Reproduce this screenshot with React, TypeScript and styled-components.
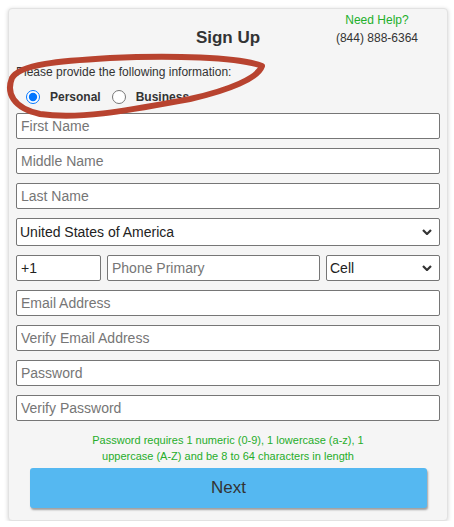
import React from "react";
import styled, { createGlobalStyle } from "styled-components";

const GlobalStyle = createGlobalStyle`
    html, body {
        margin: 0;
        padding: 0;
        background: #ffffff;
    }
    body {
        font-family: "Liberation Sans", Arial, sans-serif;
        color: #333;
    }
`;

const Card = styled.div`
    position: relative;
    box-sizing: border-box;
    width: 440px;
    height: 513px;
    margin: 8px 0 0 8px;
    padding: 2px 7px 0 7px;
    background: #f5f5f5;
    border: 1px solid #e2e2e2;
    border-radius: 4px;
    box-shadow: 0 1px 4px rgba(0, 0, 0, 0.18);
`;

const Header = styled.div`
    display: grid;
    grid-template-columns: 1fr auto 1fr;
    align-items: end;
`;

const Title = styled.h1`
    grid-column: 2;
    margin: 0;
    font-size: 17px;
    font-weight: bold;
    line-height: 20px;
    color: #333;
`;

const Help = styled.div`
    grid-column: 3;
    justify-self: end;
    margin-right: 22px;
    margin-bottom: 1px;
    text-align: center;
    font-size: 12px;
    line-height: 18px;
`;

const HelpLink = styled.div`
    color: #22b02a;
`;

const Intro = styled.p`
    margin: 17px 0 0 0;
    font-size: 12px;
    line-height: 14px;
    color: #333;
`;

const RadioRow = styled.div`
    display: flex;
    align-items: center;
    height: 22px;
    margin: 7px 0 5px 10px;
`;

const RadioLabel = styled.label`
    display: flex;
    align-items: center;
    gap: 10px;
    margin-right: 11px;
    font-size: 12px;
    font-weight: bold;
    color: #333;
    input {
        width: 14px;
        height: 14px;
        margin: 0;
        accent-color: #0075ff;
    }
`;

const Fields = styled.div`
    display: flex;
    flex-direction: column;
    gap: 9px;
`;

const Input = styled.input`
    box-sizing: border-box;
    width: 100%;
    height: 26px;
    margin: 0;
    padding: 0 4px;
    border: 1px solid #767676;
    border-radius: 2px;
    background: #fff;
    font-family: "Liberation Sans", Arial, sans-serif;
    font-size: 14px;
    color: #222;
    &::placeholder {
        color: #767676;
    }
`;

const SelectWrap = styled.div<{ $height: number }>`
    position: relative;
    height: ${(p) => p.$height}px;
    svg {
        position: absolute;
        right: 8px;
        top: 50%;
        margin-top: -3px;
        pointer-events: none;
    }
`;

const Select = styled.select`
    box-sizing: border-box;
    width: 100%;
    height: 100%;
    margin: 0;
    padding: 0 3px;
    border: 1px solid #767676;
    border-radius: 2px;
    background: #fff;
    appearance: none;
    font-family: "Liberation Sans", Arial, sans-serif;
    font-size: 14px;
    color: #222;
`;

const PhoneRow = styled.div`
    display: grid;
    grid-template-columns: 85px 1fr 114px;
    column-gap: 6px;
`;

const Hint = styled.p`
    max-width: 290px;
    margin: 11px auto 0;
    text-align: center;
    font-size: 11px;
    line-height: 16px;
    color: #26ad2a;
`;

const NextButton = styled.button`
    display: block;
    width: 397px;
    height: 40px;
    margin: 4px 0 0 14px;
    border: none;
    border-radius: 3px;
    background: #55b8f1;
    box-shadow: 1px 2px 2px rgba(0, 0, 0, 0.35);
    font-family: "Liberation Sans", Arial, sans-serif;
    font-size: 17px;
    color: #333;
`;

const Scribble = styled.svg`
    position: absolute;
    left: -9px;
    top: -9px;
    pointer-events: none;
`;

const Chevron = () => (
    <svg width="10" height="6" viewBox="0 0 10 6">
        <path d="M1 1 L5 5 L9 1" fill="none" stroke="#333" strokeWidth="2.2" />
    </svg>
);

const textFields = ["Email Address", "Verify Email Address", "Password", "Verify Password"];

export default function App() {
    const [kind, setKind] = React.useState("personal");
    return (
        <>
            <GlobalStyle />
            <Card>
                <Header>
                    <Title>Sign Up</Title>
                    <Help>
                        <HelpLink>Need Help?</HelpLink>
                        <div>(844) 888-6364</div>
                    </Help>
                </Header>
                <Intro>Please provide the following information:</Intro>
                <RadioRow>
                    <RadioLabel>
                        <input
                            type="radio"
                            name="kind"
                            checked={kind === "personal"}
                            onChange={() => setKind("personal")}
                        />
                        Personal
                    </RadioLabel>
                    <RadioLabel>
                        <input
                            type="radio"
                            name="kind"
                            checked={kind === "business"}
                            onChange={() => setKind("business")}
                        />
                        Business
                    </RadioLabel>
                </RadioRow>
                <Fields>
                    <Input placeholder="First Name" />
                    <Input placeholder="Middle Name" />
                    <Input placeholder="Last Name" />
                    <SelectWrap $height={28}>
                        <Select defaultValue="us">
                            <option value="us">United States of America</option>
                        </Select>
                        <Chevron />
                    </SelectWrap>
                    <PhoneRow>
                        <Input defaultValue="+1" />
                        <Input placeholder="Phone Primary" />
                        <SelectWrap $height={26}>
                            <Select defaultValue="cell">
                                <option value="cell">Cell</option>
                            </Select>
                            <Chevron />
                        </SelectWrap>
                    </PhoneRow>
                    {textFields.map((label) => (
                        <Input
                            key={label}
                            type={label.includes("Password") ? "password" : "text"}
                            placeholder={label}
                        />
                    ))}
                </Fields>
                <Hint>
                    Password requires 1 numeric (0-9), 1 lowercase (a-z), 1 uppercase (A-Z) and be 8 to 64
                    characters in length
                </Hint>
                <NextButton>Next</NextButton>
                {/* hand-drawn annotation over the account type choice */}
                <Scribble width="280" height="130" viewBox="0 0 280 130">
                    <path
                        d="M262 66 C240 57, 170 55, 110 58 C60 61, 20 64, 12 78 C6 93, 13 108, 40 114 C80 120, 130 110, 190 99 C230 90, 258 78, 262 66 Z"
                        fill="none"
                        stroke="#b8432f"
                        strokeWidth="6"
                        strokeLinejoin="round"
                    />
                </Scribble>
            </Card>
        </>
    );
}
